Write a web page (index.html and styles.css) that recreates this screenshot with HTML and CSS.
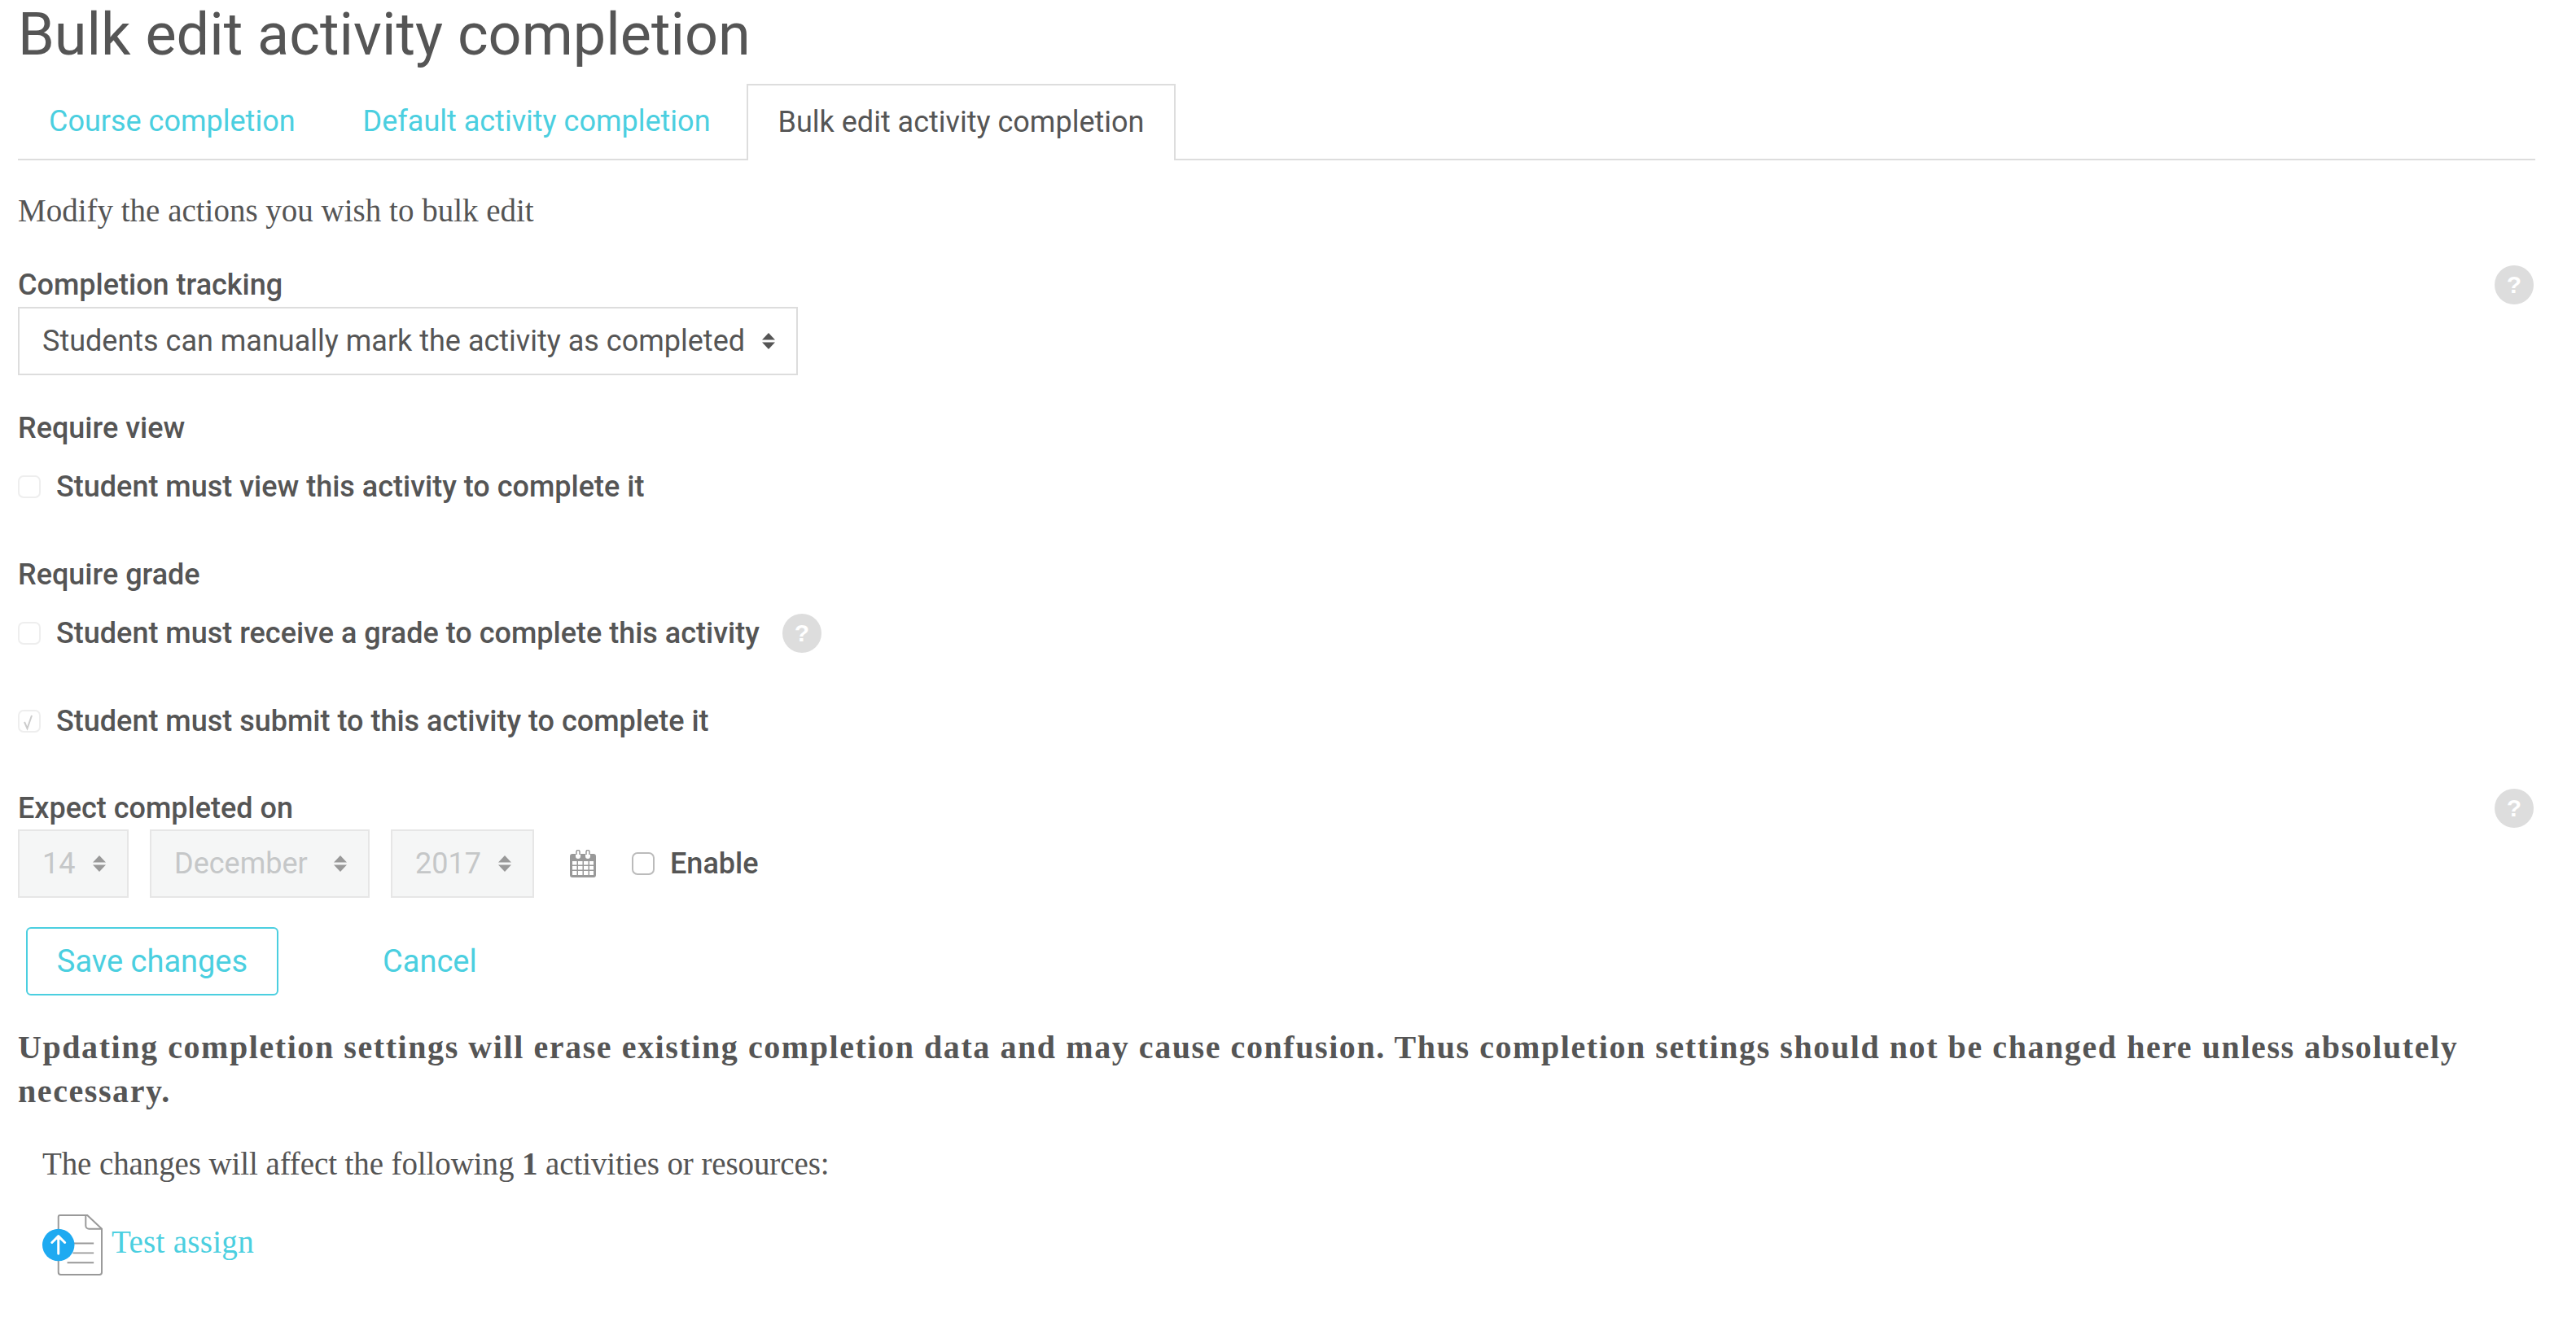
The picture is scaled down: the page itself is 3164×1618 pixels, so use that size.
FILE: index.html
```html
<!DOCTYPE html>
<html lang="en">
<head>
    <meta charset="UTF-8">
    <title>Bulk edit activity completion</title>
    <link rel="stylesheet" href="styles.css">
</head>
<body>
    <h1>Bulk edit activity completion</h1>

    <ul class="tabs">
        <li class="tab"><a href="#">Course completion</a></li>
        <li class="tab"><a href="#">Default activity completion</a></li>
        <li class="tab active">Bulk edit activity completion</li>
    </ul>

    <p class="intro">Modify the actions you wish to bulk edit</p>

    <div class="form-row row-tracking">
        <div class="label-line">
            <label>Completion tracking</label>
            <span class="help">?</span>
        </div>
        <div class="select select-tracking">
            <span>Students can manually mark the activity as completed</span>
            <svg class="updown" viewBox="0 0 16 20"><path d="M8 0l8 8.500H0zM8 20L0 11.500h16z"/></svg>
        </div>
    </div>

    <div class="form-row row-view">
        <label>Require view</label>
        <div class="check-line">
            <span class="check"></span>
            <span class="check-text">Student must view this activity to complete it</span>
        </div>
    </div>

    <div class="form-row row-grade">
        <label>Require grade</label>
        <div class="check-line">
            <span class="check"></span>
            <span class="check-text">Student must receive a grade to complete this activity</span>
            <span class="help help-inline">?</span>
        </div>
        <div class="check-line line-submit">
            <span class="check"><svg viewBox="0 0 24 24"><path d="M6 13l3.500 8L15 5"/></svg></span>
            <span class="check-text">Student must submit to this activity to complete it</span>
        </div>
    </div>

    <div class="form-row row-date">
        <div class="label-line">
            <label>Expect completed on</label>
            <span class="help">?</span>
        </div>
        <div class="date-line">
            <div class="select disabled sel-day">
                <span>14</span>
                <svg class="updown" viewBox="0 0 16 20"><path d="M8 0l8 8.500H0zM8 20L0 11.500h16z"/></svg>
            </div>
            <div class="select disabled sel-month">
                <span>December</span>
                <svg class="updown" viewBox="0 0 16 20"><path d="M8 0l8 8.500H0zM8 20L0 11.500h16z"/></svg>
            </div>
            <div class="select disabled sel-year">
                <span>2017</span>
                <svg class="updown" viewBox="0 0 16 20"><path d="M8 0l8 8.500H0zM8 20L0 11.500h16z"/></svg>
            </div>
            <svg class="calendar" viewBox="0 0 32 34">
                <path d="M3 5h4v3a3 3 0 0 0 6 0V5h6v3a3 3 0 0 0 6 0V5h4a3 3 0 0 1 3 3v23a3 3 0 0 1-3 3H3a3 3 0 0 1-3-3V8a3 3 0 0 1 3-3z" fill="#999"/>
                <path d="M8 6V2.500a2 2 0 0 1 4 0V6M20 6V2.500a2 2 0 0 1 4 0V6" fill="none" stroke="#999" stroke-width="1.500"/>
                <path d="M3 14h5.500v4.500H3zM10 14h5.500v4.500H10zM17 14h5.500v4.500H17zM24 14h5v4.500h-5zM3 20h5.500v4.500H3zM10 20h5.500v4.500H10zM17 20h5.500v4.500H17zM24 20h5v4.500h-5zM3 26h5.500v5H3zM10 26h5.500v5H10zM17 26h5.500v5H17zM24 26h5v5h-5z" fill="#fff"/>
            </svg>
            <span class="check check-enable"></span>
            <span class="check-text">Enable</span>
        </div>
    </div>

    <div class="actions">
        <a class="btn" href="#">Save changes</a>
        <a class="cancel" href="#">Cancel</a>
    </div>

    <p class="warning">Updating completion settings will erase existing completion data and may cause confusion. Thus completion settings should not be changed here unless absolutely necessary.</p>

    <div class="affected">
        <p>The changes will affect the following <b>1</b> activities or resources:</p>
        <div class="activity">
            <svg class="assign-icon" viewBox="0 0 76 76">
                <path d="M22 1h34l18 17v54a3 3 0 0 1-3 3H23a3 3 0 0 1-3-3V3a2 2 0 0 1 2-2z" fill="#fff" stroke="#999" stroke-width="2"/>
                <path d="M54 1v13a4 4 0 0 0 4 4h16" fill="none" stroke="#999" stroke-width="2"/>
                <path d="M38 36h26M38 48h26M31 60h33" fill="none" stroke="#999" stroke-width="2"/>
                <circle cx="20" cy="38" r="20" fill="#1eaaf1"/>
                <path d="M20 49V28M12 35l8-8 8 8" fill="none" stroke="#fff" stroke-width="3" stroke-linecap="round" stroke-linejoin="round"/>
            </svg>
            <a href="#">Test assign</a>
        </div>
    </div>
</body>
</html>
```

FILE: styles.css
```css
html, body {
    margin: 0;
    padding: 0;
}
body {
    background: #fff;
    color: #555;
    padding: 0 50px 0 22px;
    font-family: Roboto, sans-serif;
    font-size: 36px;
    height: 1618px;
    box-sizing: border-box;
    overflow: hidden;
}
a {
    color: #4bcfe0;
    text-decoration: none;
}
h1 {
    margin: 0;
    font-size: 72px;
    font-weight: 400;
    line-height: 86px;
}
.tabs {
    list-style: none;
    margin: 17px 0 0;
    padding: 0;
    display: flex;
    height: 92px;
    border-bottom: 2px solid #ddd;
}
.tab {
    padding: 0 38px;
    margin-right: 7px;
    line-height: 92px;
}
.tab.active {
    margin-left: -1px;
    background: #fff;
    height: 92px;
    border: 2px solid #ddd;
    border-bottom: 0;
    padding: 0 37px;
    line-height: 90px;
}
.intro {
    margin: 40px 0 0;
    font-family: "Liberation Serif", serif;
    font-size: 39px;
    line-height: 44px;
}
label {
    font-weight: 500;
    display: block;
    line-height: 44px;
}
.label-line {
    display: flex;
    align-items: center;
    justify-content: space-between;
}
.help {
    width: 48px;
    height: 48px;
    margin-right: 2px;
    border-radius: 50%;
    background: #ddd;
    color: #fff;
    font-family: "Liberation Sans", sans-serif;
    font-weight: 700;
    font-size: 30px;
    line-height: 48px;
    text-align: center;
    flex: none;
}
.help-inline {
    margin-left: 28px;
}
.select {
    display: flex;
    align-items: center;
    justify-content: space-between;
    box-sizing: border-box;
    border: 2px solid #ddd;
    height: 84px;
    padding: 0 26px 0 28px;
}
.select-tracking {
    width: 958px;
    margin-top: 3px;
}
.updown {
    width: 16px;
    height: 20px;
    fill: #555;
    flex: none;
}
.row-tracking {
    margin-top: 45px;
}
.row-view {
    margin-top: 43px;
}
.check-line {
    display: flex;
    align-items: center;
    height: 56px;
    margin-top: 22px;
}
.check {
    width: 28px;
    height: 28px;
    box-sizing: border-box;
    border: 2px solid #eee;
    border-radius: 7px;
    margin-right: 19px;
    flex: none;
}
.check svg {
    display: block;
    width: 24px;
    height: 24px;
    fill: none;
    stroke: #ccc;
    stroke-width: 2;
}
.check-text {
    font-weight: 500;
}
.row-grade {
    margin-top: 58px;
}
.line-submit {
    margin-top: 52px;
}
.row-date {
    margin-top: 55px;
}
.date-line {
    display: flex;
    align-items: center;
    margin-top: 2px;
}
.disabled {
    background: #f5f6f6;
    color: #c5c7c8;
    border-color: #e6e6e6;
    margin-right: 26px;
    padding: 0 26px 0 28px;
}
.disabled .updown {
    fill: #999;
}
.sel-day {
    width: 136px;
}
.sel-month {
    width: 270px;
}
.sel-year {
    width: 176px;
    margin-right: 0;
}
.calendar {
    width: 32px;
    height: 34px;
    margin-left: 44px;
    margin-right: 44px;
}
.check-enable {
    border-color: #bbb;
}
.actions {
    display: flex;
    align-items: center;
    margin-top: 36px;
    padding-left: 10px;
}
.btn {
    box-sizing: border-box;
    width: 310px;
    height: 84px;
    border: 2px solid #4bcfe0;
    border-radius: 6px;
    text-align: center;
    line-height: 80px;
    font-size: 38px;
}
.cancel {
    margin-left: 128px;
    font-size: 38px;
}
.warning {
    margin: 37px 0 0;
    font-family: "Liberation Serif", serif;
    font-weight: 700;
    font-size: 40px;
    letter-spacing: 1.570px;
    line-height: 54px;
}
.affected {
    padding-left: 30px;
    font-family: "Liberation Serif", serif;
    font-size: 39px;
}
.affected p {
    margin: 40px 0 0;
    line-height: 44px;
    letter-spacing: -0.100px;
}
.activity {
    display: flex;
    align-items: flex-start;
    margin-top: 40px;
}
.assign-icon {
    width: 75px;
    height: 75px;
    flex: none;
}
.activity a {
    margin-left: 10px;
    line-height: 68px;
    letter-spacing: 0.300px;
}
```
